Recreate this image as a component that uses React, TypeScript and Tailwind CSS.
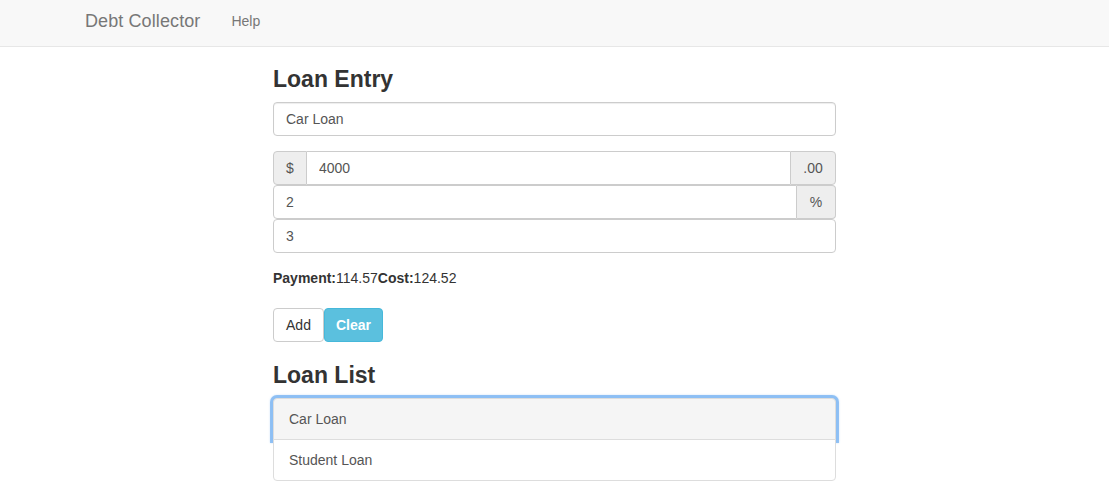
import { useState } from "react";

const loans = ["Car Loan", "Student Loan"];

export default function App() {
  const [selected] = useState(0);

  return (
    <div className="min-h-screen bg-white text-[14px] leading-[20px] text-[#333] font-['Liberation_Sans',Arial,sans-serif]">
      {/* navbar */}
      <nav className="h-[47px] bg-[#f8f8f8] border-b border-[#e7e7e7]">
        <div className="flex h-[46px] items-center pb-[4px] pl-[85px]">
          <a className="text-[18px] tracking-[0.1px] text-[#777]">Debt Collector</a>
          <a className="ml-[31px] text-[14px] text-[#777]">Help</a>
        </div>
      </nav>

      <main className="ml-[273px] w-[563px]">
        <h2 className="mt-[19px] mb-[10px] text-[23px] leading-[26px] font-bold text-[#333]">Loan Entry</h2>

        <div className="mb-[15px]">
          <input
            defaultValue="Car Loan"
            className="h-[34px] w-full rounded-[4px] border border-[#ccc] px-[12px] text-[14px] text-[#555] outline-none shadow-[inset_0_1px_1px_rgba(0,0,0,0.075)]"
          />
        </div>

        <div className="mb-[15px] flex flex-col">
          <div className="flex h-[34px]">
            <span className="flex w-[34px] items-center justify-center rounded-l-[4px] border border-[#ccc] bg-[#eee] text-[#555]">$</span>
            <input
              defaultValue="4000"
              className="min-w-0 flex-1 border-y border-[#ccc] px-[12px] text-[#555] outline-none"
            />
            <span className="flex w-[46px] items-center justify-center rounded-r-[4px] border border-[#ccc] bg-[#eee] text-[#555]">.00</span>
          </div>
          <div className="flex h-[34px]">
            <input
              defaultValue="2"
              className="min-w-0 flex-1 rounded-l-[4px] border border-[#ccc] px-[12px] text-[#555] outline-none"
            />
            <span className="flex w-[39px] items-center justify-center rounded-r-[4px] border border-l-0 border-[#ccc] bg-[#eee] text-[#555]">%</span>
          </div>
          <input
            defaultValue="3"
            className="h-[34px] w-full rounded-[4px] border border-[#ccc] px-[12px] text-[#555] outline-none"
          />
        </div>

        <p className="mb-[20px]">
          <b>Payment:</b>114.57<b>Cost:</b>124.52
        </p>

        <div className="flex">
          <button className="h-[34px] w-[51px] rounded-[4px] border border-[#ccc] bg-white text-[#333]">Add</button>
          <button className="h-[34px] w-[59px] rounded-[4px] border border-[#46b8da] bg-[#5bc0de] font-bold text-white">Clear</button>
        </div>

        <h2 className="mt-[20px] mb-[10px] text-[23px] leading-[26px] font-bold text-[#333]">Loan List</h2>

        {/* focused first item: ring bottom is covered by the next item */}
        <ul className="flex flex-col">
          {loans.map((loan, i) => (
            <li
              key={loan}
              className={
                i === selected
                  ? "h-[42px] rounded-t-[4px] border border-[#ddd] bg-[#f5f5f5] px-[15px] py-[10px] text-[#555] shadow-[0_0_0_3px_rgba(126,182,242,0.8),0_0_2px_3px_rgba(126,182,242,0.45)]"
                  : "-mt-px h-[42px] rounded-b-[4px] border border-[#ddd] bg-white px-[15px] py-[10px] text-[#555]"
              }
            >
              {loan}
            </li>
          ))}
        </ul>
      </main>
    </div>
  );
}
